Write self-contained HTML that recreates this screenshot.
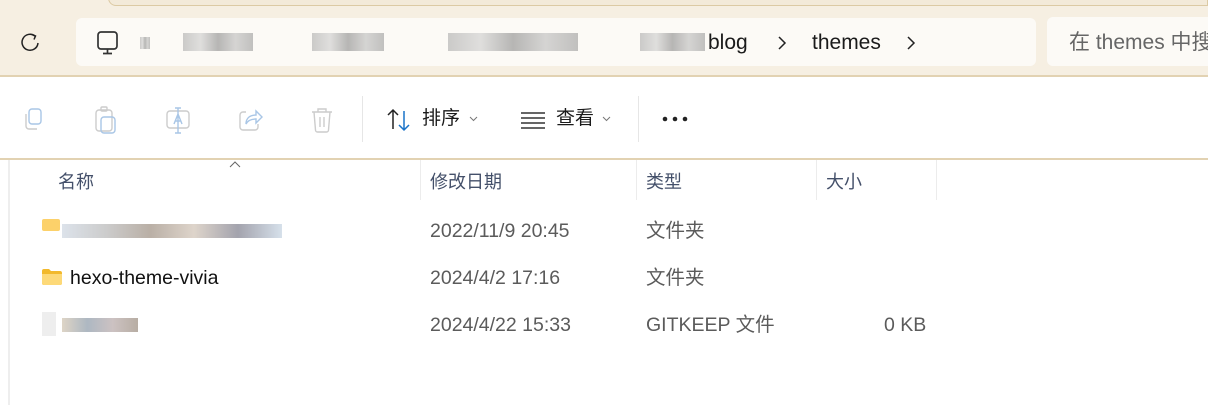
<!DOCTYPE html>
<html><head><meta charset="utf-8"><style>
*{margin:0;padding:0;box-sizing:border-box}
body{width:1208px;height:405px;overflow:hidden;background:#fff;font-family:"Liberation Sans","Noto Sans CJK SC",sans-serif;position:relative}
.a{position:absolute;line-height:1}
.hdr{left:0;top:0;width:1208px;height:77px;background:#f6efe2;border-bottom:2px solid #e2d2b2}
.tab{left:108px;top:-4px;width:1100px;height:10px;background:#f3ead9;border:1px solid #dccaa4;border-radius:0 0 0 8px}
.addr{left:76px;top:18px;width:960px;height:48px;background:#fcfaf6;border-radius:6px}
.srch{left:1047px;top:17px;width:170px;height:49px;background:#fcfaf6;border-radius:6px}
.t{font-size:21px;color:#1a1a1a;white-space:nowrap}
.blur{height:12px;background:linear-gradient(90deg,#aaa,#ccc,#888,#bbb,#999);opacity:.6}
.tool{top:78px;left:0;width:1208px;height:82px;background:#fff;border-bottom:2px solid #e2d2b2}
.sep{width:1px;background:#e6e6e6;top:96px;height:46px}
.col{top:160px;height:40px;width:1px;background:#ececec}
.h{font-size:18px;color:#44506a}
.d{font-size:19.5px;color:#5b5b5b;white-space:nowrap}
</style></head><body>
<div class="a hdr"></div>
<div class="a tab"></div>
<div class="a addr"></div>
<div class="a srch"></div>
<svg class="a" style="left:18px;top:31px" width="24" height="24" viewBox="0 0 24 24" fill="none" stroke="#222" stroke-width="1.5"><path d="M17 5A8 8 0 1 0 20 12"/><path d="M14 3.5L17.5 5L16 8.5"/></svg>
<svg class="a" style="left:95px;top:30px" width="26" height="26" viewBox="0 0 26 26" fill="none" stroke="#333" stroke-width="1.7"><rect x="3" y="2" width="19" height="17" rx="3"/><path d="M12.5 19v4M8 23.5h9"/></svg>
<div class="a blur" style="left:140px;top:37px;width:10px"></div>
<div class="a blur" style="left:183px;top:33px;width:70px;height:18px"></div>
<div class="a blur" style="left:312px;top:33px;width:72px;height:18px"></div>
<div class="a blur" style="left:448px;top:33px;width:130px;height:18px"></div>
<div class="a blur" style="left:640px;top:33px;width:65px;height:18px"></div>
<div class="a t" style="left:708px;top:32px">blog</div>
<svg class="a" style="left:777px;top:36px" width="10" height="14" viewBox="0 0 10 14" fill="none" stroke="#222" stroke-width="1.5"><path d="M2 1l6 6-6 6"/></svg>
<div class="a t" style="left:812px;top:32px">themes</div>
<svg class="a" style="left:906px;top:36px" width="10" height="14" viewBox="0 0 10 14" fill="none" stroke="#222" stroke-width="1.5"><path d="M2 1l6 6-6 6"/></svg>
<div class="a t" style="left:1069px;top:32px;color:#666">在 themes 中搜</div>
<div class="a tool"></div>
<svg class="a" style="left:20px;top:106px" width="28" height="28" viewBox="0 0 28 28" fill="none" stroke="#a9c6e6" stroke-width="1.4"><rect x="9" y="3" width="12" height="15" rx="3"/><path d="M6 8v12a3 3 0 0 0 3 3h8" stroke="#ccc"/></svg>
<svg class="a" style="left:92px;top:105px" width="28" height="30" viewBox="0 0 28 30" fill="none" stroke="#ccc" stroke-width="1.4"><rect x="4" y="5" width="16" height="21" rx="3"/><rect x="9" y="2" width="6" height="4" rx="1"/><rect x="9" y="12" width="14" height="16" rx="3" stroke="#a9c6e6"/></svg>
<svg class="a" style="left:164px;top:106px" width="28" height="28" viewBox="0 0 28 28" fill="none" stroke="#ccc" stroke-width="1.4"><rect x="3" y="5" width="22" height="17" rx="3"/><path d="M10 18l4-10 4 10M11.5 15h5M14 2v25M11 2h6M11 27h6" stroke="#a9c6e6"/></svg>
<svg class="a" style="left:236px;top:106px" width="28" height="28" viewBox="0 0 28 28" fill="none" stroke="#ccc" stroke-width="1.4"><path d="M10 6H7a3 3 0 0 0-3 3v12a3 3 0 0 0 3 3h12a3 3 0 0 0 3-3v-3"/><path d="M10 18c0-6 4-9 10-9V5l6 6-6 6v-4c-4 0-8 1-10 5z" stroke="#a9c6e6"/></svg>
<svg class="a" style="left:308px;top:106px" width="28" height="28" viewBox="0 0 28 28" fill="none" stroke="#ccc" stroke-width="1.4"><path d="M4 6h20M10 6V3h8v3M6 6l1.5 18a2 2 0 0 0 2 2h9a2 2 0 0 0 2-2L22 6M12 11v10M16 11v10"/></svg>
<div class="a sep" style="left:362px"></div>
<svg class="a" style="left:386px;top:107px" width="26" height="26" viewBox="0 0 26 26" fill="none" stroke-width="1.5"><path d="M7 22V3M2 8l5-5 5 5" stroke="#222"/><path d="M18 4v19M13 18l5 5 5-5" stroke="#1a73c8"/></svg>
<div class="a t" style="left:422px;top:109px;font-size:19px">排序</div>
<svg class="a" style="left:469px;top:116px" width="9" height="6" viewBox="0 0 9 6" fill="none" stroke="#777"><path d="M1 1l3.5 3.5L8 1"/></svg>
<svg class="a" style="left:520px;top:110px" width="26" height="20" viewBox="0 0 26 20" stroke="#333" stroke-width="1.5"><path d="M1 3h24M1 8h24M1 13h24M1 18h24"/></svg>
<div class="a t" style="left:556px;top:109px;font-size:19px">查看</div>
<svg class="a" style="left:602px;top:116px" width="9" height="6" viewBox="0 0 9 6" fill="none" stroke="#777"><path d="M1 1l3.5 3.5L8 1"/></svg>
<div class="a sep" style="left:638px"></div>
<svg class="a" style="left:662px;top:116px" width="28" height="6"><circle cx="3" cy="3" r="2.3" fill="#222"/><circle cx="13" cy="3" r="2.3" fill="#222"/><circle cx="23" cy="3" r="2.3" fill="#222"/></svg>
<div class="a" style="left:8px;top:160px;width:2px;height:245px;background:#eee"></div>
<svg class="a" style="left:229px;top:161px" width="12" height="7" viewBox="0 0 12 7" fill="none" stroke="#666"><path d="M1 6l5-5 5 5"/></svg>
<div class="a h" style="left:58px;top:173px">名称</div>
<div class="a col" style="left:420px"></div><div class="a h" style="left:430px;top:173px">修改日期</div>
<div class="a col" style="left:636px"></div><div class="a h" style="left:646px;top:173px">类型</div>
<div class="a col" style="left:816px"></div><div class="a h" style="left:826px;top:173px">大小</div>
<div class="a col" style="left:936px"></div>
<div class="a" style="left:42px;top:219px;width:18px;height:12px;background:#fcd16a;border-radius:2px"></div>
<div class="a blur" style="left:62px;top:224px;width:220px;height:14px;background:linear-gradient(90deg,#c5cfdc,#aaa,#8b7a6a,#c8b8a8,#667,#bcd)"></div>
<div class="a d" style="left:430px;top:222px">2022/11/9 20:45</div>
<div class="a d" style="left:646px;top:222px">文件夹</div>
<svg class="a" style="left:41px;top:268px" width="22" height="18" viewBox="0 0 22 18"><path d="M1 3a2 2 0 0 1 2-2h5l2 2h9a2 2 0 0 1 2 2v10a2 2 0 0 1-2 2H3a2 2 0 0 1-2-2z" fill="#f2b92c"/><path d="M1 6h20v9a2 2 0 0 1-2 2H3a2 2 0 0 1-2-2z" fill="#fdd978"/></svg>
<div class="a" style="left:70px;top:269px;font-size:19.5px;color:#111">hexo-theme-vivia</div>
<div class="a d" style="left:430px;top:269px">2024/4/2 17:16</div>
<div class="a d" style="left:646px;top:269px">文件夹</div>
<div class="a" style="left:42px;top:312px;width:14px;height:24px;background:#eee"></div>
<div class="a blur" style="left:62px;top:318px;width:76px;height:14px;background:linear-gradient(90deg,#c8b8a0,#789,#a99,#876)"></div>
<div class="a d" style="left:430px;top:316px">2024/4/22 15:33</div>
<div class="a d" style="left:646px;top:316px">GITKEEP 文件</div>
<div class="a d" style="left:884px;top:316px">0 KB</div>
</body></html>
